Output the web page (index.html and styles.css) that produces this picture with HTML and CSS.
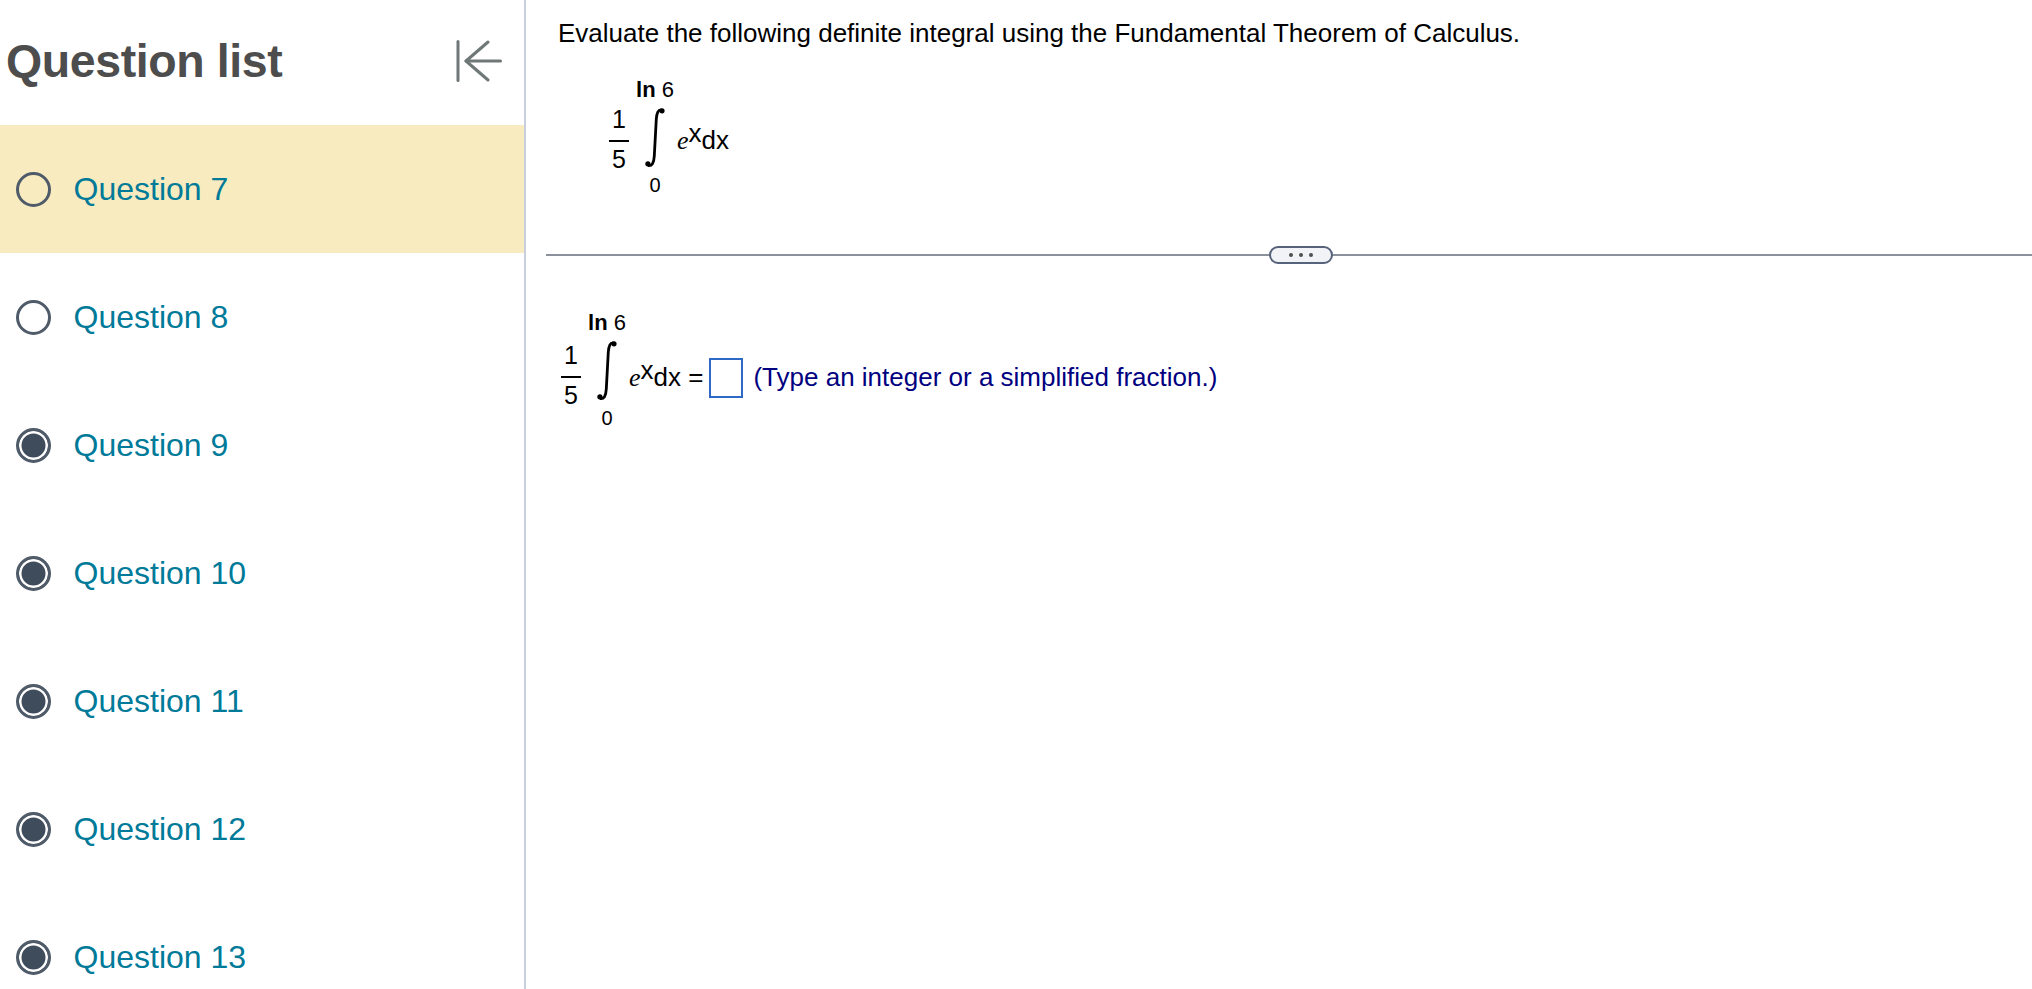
FILE: index.html
```html
<!DOCTYPE html>
<html lang="en">
<head>
<meta charset="utf-8">
<title>Question list</title>
<link rel="stylesheet" href="styles.css">
</head>
<body>
<div class="app">
  <aside class="sidebar">
    <header class="side-head">
      <h1>Question list</h1>
      <svg class="collapse" viewBox="0 0 46 42" width="46" height="42" fill="none" stroke="#6f7777" stroke-width="3" stroke-linecap="round" stroke-linejoin="round"><path d="M2 1.500V40.500"/><path d="M44.500 21H10"/><path d="M32 2 10 21 32 40"/></svg>
    </header>
    <ul class="qlist">
      <li class="q current"><span class="dot"></span><span>Question 7</span></li>
      <li class="q"><span class="dot"></span><span>Question 8</span></li>
      <li class="q"><span class="dot done"></span><span>Question 9</span></li>
      <li class="q"><span class="dot done"></span><span>Question 10</span></li>
      <li class="q"><span class="dot done"></span><span>Question 11</span></li>
      <li class="q"><span class="dot done"></span><span>Question 12</span></li>
      <li class="q"><span class="dot done"></span><span>Question 13</span></li>
    </ul>
  </aside>
  <main class="main">
    <p class="prompt">Evaluate the following definite integral using the Fundamental Theorem of Calculus.</p>
    <div class="math given">
      <span class="frac"><span>1</span><span>5</span></span>
      <span class="integral">
        <span class="limit"><b>ln</b> 6</span>
        <svg viewBox="0 0 20 61" width="20" height="61"><path d="M16.500 3C13 2.500 11.800 6 11.300 12L9.300 49C8.900 56 7 59.200 3 58.500" fill="none" stroke="#000" stroke-width="2.800"/><circle cx="17" cy="3.800" r="2.600"/><circle cx="2.900" cy="56.800" r="2.600"/></svg>
        <span class="limit low">0</span>
      </span>
      <span class="rest"><span class="expr"><i>e</i><span class="sup">x</span>dx</span></span>
    </div>
    <div class="divider"><span class="more"><i></i><i></i><i></i></span></div>
    <div class="math answer">
      <span class="frac"><span>1</span><span>5</span></span>
      <span class="integral">
        <span class="limit"><b>ln</b> 6</span>
        <svg viewBox="0 0 20 61" width="20" height="61"><path d="M16.500 3C13 2.500 11.800 6 11.300 12L9.300 49C8.900 56 7 59.200 3 58.500" fill="none" stroke="#000" stroke-width="2.800"/><circle cx="17" cy="3.800" r="2.600"/><circle cx="2.900" cy="56.800" r="2.600"/></svg>
        <span class="limit low">0</span>
      </span>
      <span class="rest">
        <span class="expr"><i>e</i><span class="sup">x</span>dx =</span>
        <span class="box"></span>
        <span class="hint">(Type an integer or a simplified fraction.)</span>
      </span>
    </div>
  </main>
</div>
</body>
</html>
```
FILE: styles.css
```css
* { box-sizing: border-box; }
html, body { margin: 0; height: 100%; overflow: hidden; background: #fff; }
body { font-family: "Liberation Sans", Arial, sans-serif; color: #000; }
.app { display: flex; height: 989px; }
.sidebar { width: 526px; flex: none; border-right: 2px solid #c9cfdc; overflow: hidden; }
.side-head { height: 125px; display: flex; align-items: center; justify-content: space-between; padding: 0 22px 3px 6px; }
.side-head h1 { margin: 0; font-size: 46.500px; font-weight: 700; color: #4d4d4d; letter-spacing: -0.400px; }
.collapse { display: block; }
.qlist { list-style: none; margin: 0; padding: 0; }
.q { height: 128px; display: flex; align-items: center; padding-left: 16px; gap: 22.500px; font-size: 32px; color: #007a99; }
.q.current { background: #f8ebbf; }
.dot { width: 35px; height: 35px; flex: none; border-radius: 50%; border: 3.500px solid #4f5b69; background: #fff; }
.q.current .dot { background: transparent; }
.dot.done { background: #3f4c5c; box-shadow: inset 0 0 0 2.500px #fff; }
.main { flex: 1; min-width: 0; padding: 17px 0 0 20px; }
.prompt { margin: 0 0 0 12px; font-size: 26px; line-height: 32px; }
.math { display: flex; align-items: center; }
.given { margin: 29px 0 0 63px; }
.answer { margin: 60px 0 0 15px; }
.frac { display: flex; flex-direction: column; align-items: center; width: 20px; margin-top: 3px; font-size: 25px; line-height: 28px; }
.frac span:first-child { border-bottom: 2px solid #000; width: 100%; text-align: center; padding-bottom: 7px; }
.frac span:last-child { padding-top: 3px; }
.integral { display: flex; flex-direction: column; align-items: center; width: 44px; margin-left: 4px; font-size: 22px; line-height: 24px; }
.answer .integral { margin-top: -5px; }
.integral svg { display: block; margin: 5px 0; }
.limit { display: block; height: 24px; }
.limit.low { font-size: 20px; }
.rest { display: flex; align-items: center; margin-top: 9px; }
.given .rest { margin-top: 6.500px; }
.expr { font-size: 26px; line-height: 30px; white-space: pre; }
.expr i { font-family: "Liberation Serif", serif; font-size: 26px; }
.sup { font-size: 26px; position: relative; top: -7px; }
.divider { height: 2px; background: #8a909c; margin-top: 57px; display: flex; justify-content: center; align-items: center; padding-left: 24px; }
.more { width: 64px; height: 18px; border: 2px solid #56637a; border-radius: 9px; background: #f1f3f6; display: flex; align-items: center; justify-content: center; gap: 6px; flex: none; }
.more i { width: 4px; height: 4px; border-radius: 50%; background: #4f4f4f; }
.box { width: 34px; height: 40px; border: 2px solid #2f69c6; margin-left: 6px; flex: none; }
.hint { color: #000080; font-size: 26px; margin-left: 10px; white-space: nowrap; }
```
